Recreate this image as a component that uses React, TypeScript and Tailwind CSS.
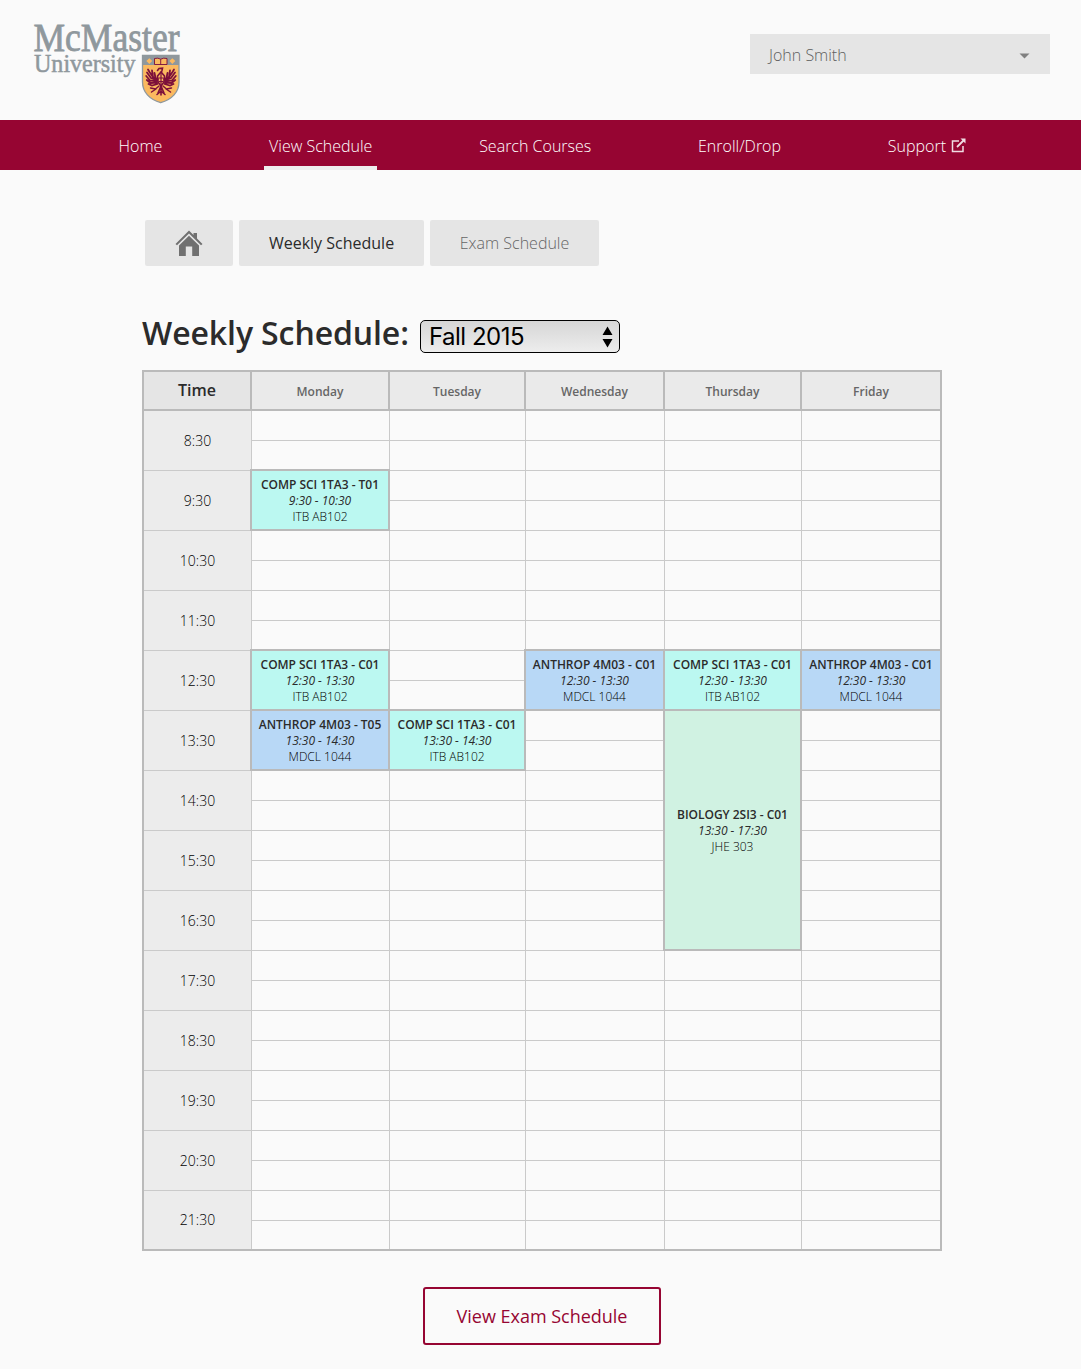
import React from "react";

type Course = {
  col: string;
  row: string;
  fill: string;
  title: string;
  time: string;
  room: string;
  last?: boolean;
};

const days = ["Monday", "Tuesday", "Wednesday", "Thursday", "Friday"];
const hours = Array.from({ length: 14 }, (_, i) => `${i + 8}:30`);

const courses: Course[] = [
  { col: "col-start-2", row: "row-start-4 row-span-2", fill: "bg-[#bbf8f1]", title: "COMP SCI 1TA3 - T01", time: "9:30 - 10:30", room: "ITB AB102" },
  { col: "col-start-2", row: "row-start-10 row-span-2", fill: "bg-[#bbf8f1]", title: "COMP SCI 1TA3 - C01", time: "12:30 - 13:30", room: "ITB AB102" },
  { col: "col-start-4", row: "row-start-10 row-span-2", fill: "bg-[#b8d8f6]", title: "ANTHROP 4M03 - C01", time: "12:30 - 13:30", room: "MDCL 1044" },
  { col: "col-start-5", row: "row-start-10 row-span-2", fill: "bg-[#bbf8f1]", title: "COMP SCI 1TA3 - C01", time: "12:30 - 13:30", room: "ITB AB102" },
  { col: "col-start-6", row: "row-start-10 row-span-2", fill: "bg-[#b8d8f6]", title: "ANTHROP 4M03 - C01", time: "12:30 - 13:30", room: "MDCL 1044", last: true },
  { col: "col-start-2", row: "row-start-12 row-span-2", fill: "bg-[#b8d8f6]", title: "ANTHROP 4M03 - T05", time: "13:30 - 14:30", room: "MDCL 1044" },
  { col: "col-start-3", row: "row-start-12 row-span-2", fill: "bg-[#bbf8f1]", title: "COMP SCI 1TA3 - C01", time: "13:30 - 14:30", room: "ITB AB102" },
  { col: "col-start-5", row: "row-start-12 row-span-8", fill: "bg-[#d0f2e2]", title: "BIOLOGY 2SI3 - C01", time: "13:30 - 17:30", room: "JHE 303" },
];

function Logo() {
  return (
    <svg width="156" height="96" viewBox="28 9 156 96" className="block overflow-visible" aria-label="McMaster University">
      <g fill="#8f989d" stroke="#8f989d" fontFamily="'Liberation Serif', serif">
        <text x="33.500" y="50.500" fontSize="39" strokeWidth="0.8" textLength="146" lengthAdjust="spacingAndGlyphs">McMaster</text>
        <text x="34" y="72" fontSize="24.500" strokeWidth="0.5" textLength="101.500" lengthAdjust="spacingAndGlyphs">University</text>
      </g>
      <path d="M142.500 55.500H179V82C179 92 172 99.500 160.700 102.700C149.500 99.500 142.500 92 142.500 82Z" fill="#fbb95f" stroke="#8f989d" strokeWidth="1.300" />
      <path d="M142.500 55.500H179V65H142.500Z" fill="#8f989d" />
      <path d="M154.500 58.500Q158 57.500 160.700 59.200Q163.500 57.500 167 58.500V64.500H154.500Z" fill="#fbb95f" stroke="#7c0f3a" strokeWidth="0.900" />
      <path d="M160.700 59.200V64.500" stroke="#7c0f3a" strokeWidth="0.900" />
      <path d="M149.300 58.300L151 59.800L152.200 61L151 62.300L149.300 63.900L147.700 62.300L146.300 61L147.700 59.800ZM172.300 58.300L174 59.800L175.300 61L174 62.300L172.300 63.900L170.700 62.300L169.300 61L170.700 59.800Z" fill="#fbb95f" />
      <g fill="none" stroke="#7c0f3a" strokeLinecap="round">
        <path d="M157.500 70.500L159 68.500L162.500 68.200L162 70.500L161 73" strokeWidth="1.600" />
        <path d="M161 72L157.500 76L158 82L161 86L164 82L164.500 76Z" strokeWidth="1.600" />
        <path d="M161 74V88M159 78H163M159 81.500H163" strokeWidth="1.200" />
        <path d="M158 79L153 77L149.500 72L148 69.500M157.500 80L151 78L147 72.500M157 81L150 80.500L146.200 76M157 82.500L150.500 83L146.800 80M157.500 84L152 85.500L148.500 84M153 77L152 70.500M155.500 78L154.500 73" strokeWidth="1.800" />
        <path d="M164 79L169 77L172.500 72L174 69.500M164.500 80L171 78L175 72.500M165 81L172 80.500L175.800 76M165 82.500L171.500 83L175.200 80M164.500 84L170 85.500L173.500 84M169 77L170 70.500M166.500 78L167.500 73" strokeWidth="1.800" />
        <path d="M159 86L155.500 89L150.500 88M156 89L151.500 92M163 86L166.500 89L171.500 88M166 89L170.500 92" strokeWidth="1.500" />
        <path d="M161 86L158 93M161 86V95M161 86L164 93M157 94.500L160 92M165 94.500L162 92" strokeWidth="1.600" />
      </g>
    </svg>
  );
}

function NavItem({ children, active }: { children: React.ReactNode; active?: boolean }) {
  return (
    <a className={`flex h-[50px] items-center border-b-4 px-[5px] pt-[6px] whitespace-nowrap ${active ? "border-[#eeeeee]" : "border-transparent"}`}>
      {children}
    </a>
  );
}

export default function App() {
  return (
    <div className="h-[1369px] w-[1081px] overflow-hidden bg-[#fafafa] font-['Open_Sans',sans-serif] text-[#2b2b2b]">
      <header className="flex h-[120px] items-start justify-between pr-[31px] pl-7">
        <div className="pt-[9px]">
          <Logo />
        </div>
        <div className="mt-[34px] flex h-10 w-[300px] items-center justify-between bg-[#e5e5e5] pr-5 pl-[19px] text-base font-light text-[#606060]">
          <span className="pt-[2px]">John Smith</span>
          <svg width="11" height="6" viewBox="0 0 11 6" className="mt-[3px]">
            <path d="M0.500 0.500H10.500L5.500 5.500Z" fill="#808080" />
          </svg>
        </div>
      </header>

      <nav className="flex h-[50px] justify-between bg-[#960532] pr-[110px] pl-[113.500px] text-base font-light text-white">
        <NavItem>Home</NavItem>
        <NavItem active>View Schedule</NavItem>
        <NavItem>Search Courses</NavItem>
        <NavItem>Enroll/Drop</NavItem>
        <NavItem>
          Support
          <svg width="15" height="15" viewBox="0 0 15 15" className="mb-[2px] ml-[5px]" fill="none" stroke="#efdde3" strokeWidth="1.500">
            <path d="M8 3H1.500V13.500H12V8" />
            <path d="M6 9L12.500 2.500" strokeWidth="1.800" />
            <path d="M9.500 0.500H14.500V5.500Z" fill="#efdde3" stroke="none" />
          </svg>
        </NavItem>
      </nav>

      <main className="ml-[142px] w-[800px]">
        <div className="ml-[3px] flex gap-[6px] pt-[50px] text-base">
          <a className="flex h-[46px] w-[88px] items-center justify-center rounded-xs bg-[#e5e5e5]">
            <svg width="28" height="27" viewBox="0 0 28 27" fill="#707070">
              <path d="M14 0.500L18.500 5V3H22V8.500L27.500 14L26 15.300L14 3.600L2 15.300L0.500 14Z" />
              <path d="M14 5.800L24 15.500V26H17.200V16.500H10.800V26H4V15.500Z" />
            </svg>
          </a>
          <a className="flex h-[46px] w-[185px] items-center justify-center rounded-xs bg-[#e5e5e5]">Weekly Schedule</a>
          <a className="flex h-[46px] w-[169px] items-center justify-center rounded-xs bg-[#e5e5e5] font-light text-[#666666]">Exam Schedule</a>
        </div>

        <div className="mt-[54px] flex h-[50px]">
          <h1 className="w-[278px] text-[32px] leading-[25px] font-semibold tracking-[-0.1px] whitespace-nowrap">Weekly Schedule:</h1>
          <div className="flex h-[33px] w-[200px] items-center justify-between rounded-[5px] border border-black bg-linear-to-b from-[#d6d6d6] to-[#ededed] pr-[6px] pl-2 font-['Inter',sans-serif] text-2xl tracking-[-0.5px] text-black">
            <span>Fall 2015</span>
            <svg width="11" height="22" viewBox="0 0 11 22">
              <path d="M5.500 0.500L10.500 9H0.500ZM5.500 21.500L10.500 13H0.500Z" />
            </svg>
          </div>
        </div>

        <div className="grid h-[881px] grid-cols-[108px_138px_136px_139px_137px_138px] grid-rows-[39px_repeat(27,30px)_28px] border-2 border-[#bababa]">
          <div className="col-start-1 row-start-1 flex items-center justify-center border-r-2 border-b-2 border-[#bababa] bg-[#e5e5e5] pb-[2px] text-base font-semibold">Time</div>
          {days.map((day, i) => (
            <div
              key={day}
              className={`row-start-1 flex items-center justify-center border-b-2 border-[#bababa] bg-[#eaeaea] pt-[2px] text-xs font-semibold text-[#666666] ${i < 4 ? "border-r-2" : ""}`}
            >
              {day}
            </div>
          ))}
          {hours.map((hour, h) => (
            <React.Fragment key={hour}>
              <div
                className={`col-start-1 flex items-center justify-center border-r border-[#cacaca] bg-[#ececec] text-sm font-light text-black ${h < 13 ? "border-b" : ""}`}
                style={{ gridRow: `${h * 2 + 2} / span 2` }}
              >
                {hour}
              </div>
              {[0, 1].map((half) =>
                days.map((day, d) => (
                  <div
                    key={day + half}
                    className={`border-[#cacaca] ${d < 4 ? "border-r" : ""} ${h === 13 && half === 1 ? "" : "border-b"}`}
                    style={{ gridRow: h * 2 + 2 + half, gridColumn: d + 2 }}
                  />
                ))
              )}
            </React.Fragment>
          ))}
          {courses.map((c) => (
            <div
              key={c.col + c.row}
              className={`${c.col} ${c.row} ${c.fill} z-10 -mt-[2px] -ml-[2px] flex flex-col items-center justify-center border-2 border-[#bababa] pt-[2px] text-xs leading-4 whitespace-nowrap ${c.last ? "border-r-0" : ""}`}
            >
              <strong className="font-semibold tracking-[-0.03px]">{c.title}</strong>
              <em>{c.time}</em>
              <span className="font-light text-black">{c.room}</span>
            </div>
          ))}
        </div>

        <div className="flex justify-center pt-9">
          <a className="flex h-[58px] w-[238px] items-center justify-center rounded-[3px] border-2 border-[#960532] text-lg tracking-[-0.02px] text-[#960532]">View Exam Schedule</a>
        </div>
      </main>
    </div>
  );
}
